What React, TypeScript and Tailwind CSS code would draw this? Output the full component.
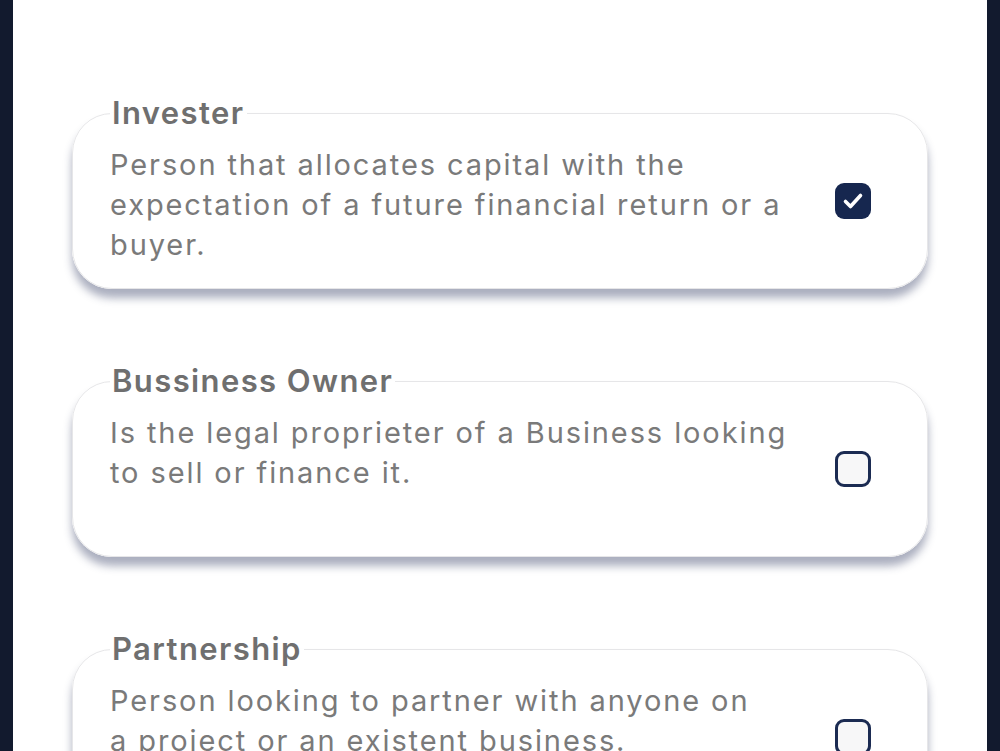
import * as React from "react";

type Role = {
  title: string;
  lines: string[];
  checked: boolean;
};

const roles: Role[] = [
  {
    title: "Invester",
    lines: [
      "Person that allocates capital with the",
      "expectation of a future financial return or a",
      "buyer.",
    ],
    checked: true,
  },
  {
    title: "Bussiness Owner",
    lines: ["Is the legal proprieter of a Business looking", "to sell or finance it."],
    checked: false,
  },
  {
    title: "Partnership",
    lines: ["Person looking to partner with anyone on", "a project or an existent business."],
    checked: false,
  },
];

const Checkbox = ({ checked }: { checked: boolean }) => {
  return (
    <div
      className={
        checked
          ? "flex h-[36px] w-[36px] shrink-0 items-center justify-center rounded-[9px] bg-[#16274f]"
          : "h-[36px] w-[36px] shrink-0 rounded-[9px] border-[3px] border-[#1b2b52] bg-[#f7f7f8]"
      }
    >
      {checked && (
        <svg width="24" height="24" viewBox="0 0 24 24" fill="none">
          <path
            d="M4.5 12.5l5 5 10-11"
            stroke="#ffffff"
            strokeWidth="3.6"
            strokeLinecap="round"
            strokeLinejoin="round"
          />
        </svg>
      )}
    </div>
  );
};

const RoleCard = ({ role }: { role: Role }) => {
  return (
    <fieldset className="h-[194px] rounded-[40px] border border-[#e6e6e8] bg-white pl-[37px] pr-[56px] shadow-[0_9px_9px_rgba(45,55,95,0.4)]">
      <legend className="px-[2px] text-[31px] font-semibold leading-[34px] tracking-[1.4px] text-[#6f6f6f]">
        {role.title}
      </legend>
      <div className="flex h-[158px] items-start justify-between">
        <p className="mt-[15px] whitespace-nowrap text-[29px] leading-[40px] tracking-[1.9px] text-[#7a7a7a]">
          {role.lines.map((line, i) => (
            <React.Fragment key={i}>
              {line}
              {i < role.lines.length - 1 && <br />}
            </React.Fragment>
          ))}
        </p>
        <div className="mt-[53px]">
          <Checkbox checked={role.checked} />
        </div>
      </div>
    </fieldset>
  );
};

export default function App() {
  return (
    <div
      className="h-[751px] w-[1000px] overflow-hidden bg-[#121a2e] px-[13px]"
      style={{ fontFamily: "Inter, 'Noto Sans', sans-serif" }}
    >
      <div className="flex h-full flex-col gap-[75px] bg-white px-[59px] pt-[96px]">
        {roles.map((role) => (
          <RoleCard key={role.title} role={role} />
        ))}
      </div>
    </div>
  );
}
